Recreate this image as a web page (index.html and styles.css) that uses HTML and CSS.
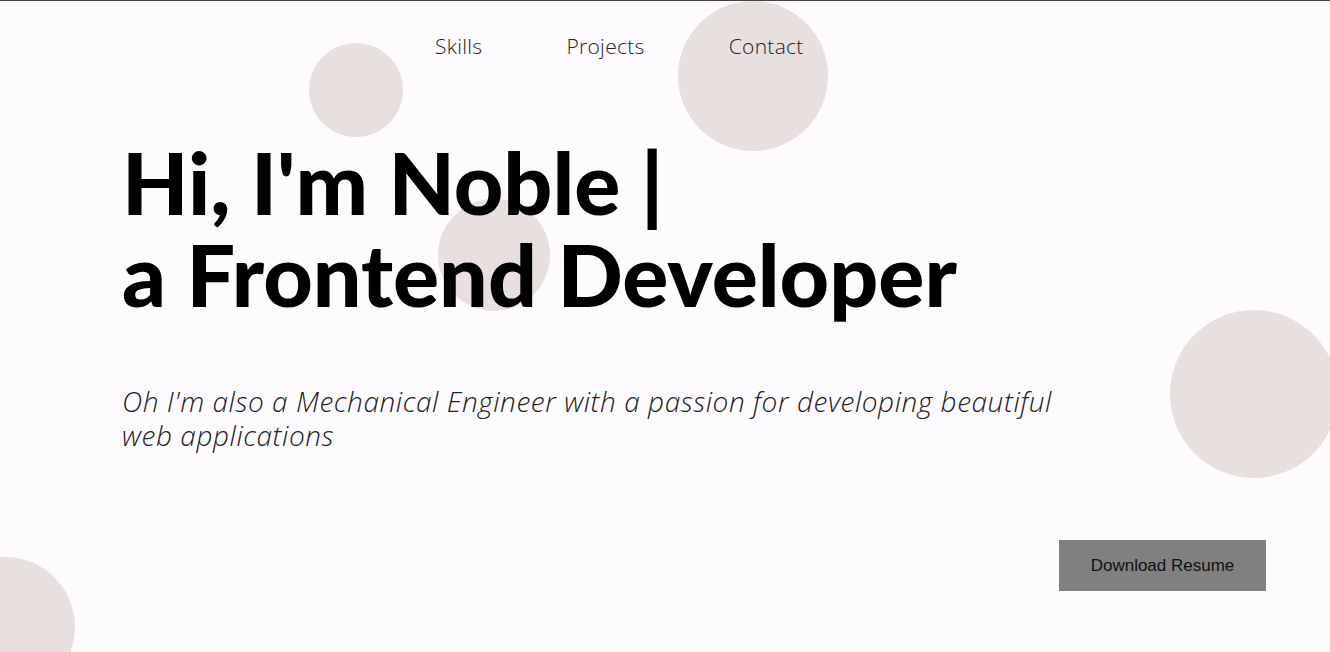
FILE: index.html
```html
<!DOCTYPE html>
<html lang="en">
<head>
<meta charset="utf-8">
<title>Noble</title>
<link rel="stylesheet" href="styles.css">
</head>
<body>
<div class="page">
  <span class="bubble b1"></span>
  <span class="bubble b2"></span>
  <span class="bubble b3"></span>
  <span class="bubble b4"></span>
  <span class="bubble b5"></span>
  <nav class="nav">
    <a href="#skills">Skills</a>
    <a href="#projects">Projects</a>
    <a href="#contact">Contact</a>
  </nav>
  <main class="hero">
    <h1 class="title">Hi, I'm Noble |<br>a Frontend Developer</h1>
    <p class="lead">Oh I'm also a Mechanical Engineer with a passion for developing beautiful web applications</p>
    <div class="actions">
      <button class="btn">Download Resume</button>
    </div>
  </main>
</div>
</body>
</html>
```

FILE: styles.css
```css
html, body {
  margin: 0;
  padding: 0;
  height: 100%;
}
body {
  background: #fdfbfd;
  border-top: 1px solid #444;
  box-sizing: border-box;
  overflow: hidden;
}
.page {
  position: relative;
  height: 651px;
  overflow: hidden;
}
.bubble {
  position: absolute;
  border-radius: 50%;
  background: #e8e0df;
  z-index: 0;
}
.b1 { left: 309px; top: 42px; width: 94px; height: 94px; }
.b2 { left: 678px; top: 0px; width: 150px; height: 150px; }
.b3 { left: 438px; top: 198px; width: 112px; height: 112px; }
.b4 { left: 1170px; top: 309px; width: 168px; height: 168px; }
.b5 { left: -65px; top: 556px; width: 140px; height: 140px; }

.nav {
  position: relative;
  z-index: 1;
  display: flex;
  gap: 84px;
  padding: 31px 0 0 435px;
  font-family: "Open Sans", "Lato", sans-serif;
  font-weight: 300;
  font-size: 21px;
  letter-spacing: 0.3px;
  line-height: 28px;
}
.nav a {
  color: #222;
  text-decoration: none;
}
.hero {
  position: relative;
  z-index: 1;
  padding: 0 64px 0 122px;
}
.title {
  margin: 76px 0 0;
  font-family: "Lato", "Open Sans", sans-serif;
  font-weight: 900;
  font-size: 86px;
  line-height: 92px;
  color: #000;
}
.lead {
  margin: 64px 0 0;
  max-width: 960px;
  font-family: "Open Sans", "Lato", sans-serif;
  font-weight: 300;
  font-style: italic;
  font-size: 28px;
  letter-spacing: 0.55px;
  line-height: 34px;
  color: #222;
}
.actions {
  display: flex;
  justify-content: flex-end;
  margin-top: 88px;
}
.btn {
  width: 207px;
  height: 51px;
  border: none;
  background: #808080;
  color: #111;
  font-family: "Liberation Sans", Arial, sans-serif;
  font-size: 17px;
  padding: 0;
}
```
